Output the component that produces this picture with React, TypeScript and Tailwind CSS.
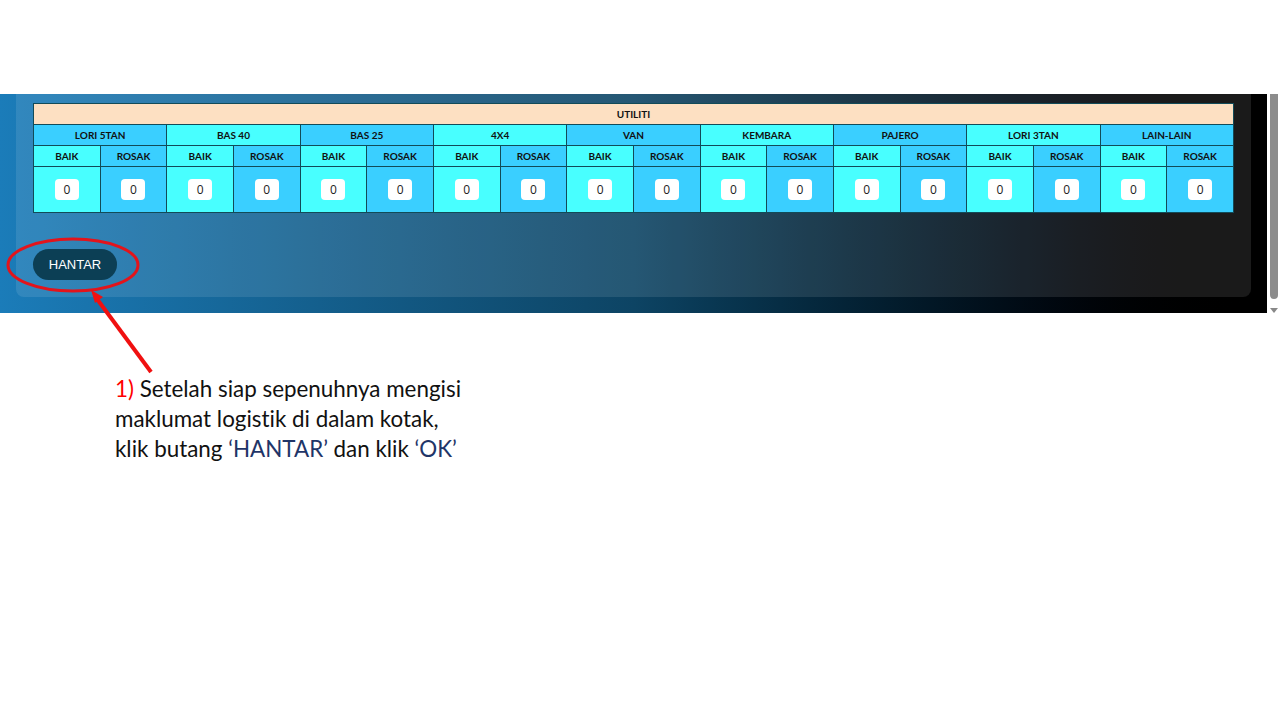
const vehicles = [
  'LORI 5TAN',
  'BAS 40',
  'BAS 25',
  '4X4',
  'VAN',
  'KEMBARA',
  'PAJERO',
  'LORI 3TAN',
  'LAIN-LAIN',
];

const cell = 'border border-[#124b58] text-center align-middle';
const deep = 'bg-[#3acfff]';
const light = 'bg-[#48ffff]';

export default function App() {
  return (
    <div className="relative w-[1280px] h-[720px] bg-white overflow-hidden font-['Lato',sans-serif]">
      <div className="h-[94px]" />

      {/* screenshot of the form */}
      <div className="flex h-[219px]">
        <div className="w-[1267px] bg-gradient-to-r from-[#1b7cb9] via-[#0d4464] to-black px-4 pb-4">
          <div className="h-full rounded-b-lg bg-white/10 px-[17px] pt-[9px]">
            <table className="w-[1201px] table-fixed border-collapse text-[10px] font-bold text-[#111]">
              <tbody>
                <tr className="h-[21px]">
                  <td colSpan={18} className={`${cell} bg-[#fde0c2]`}>
                    UTILITI
                  </td>
                </tr>
                <tr className="h-[21px]">
                  {vehicles.map((v, i) => (
                    <td key={v} colSpan={2} className={`${cell} ${i % 2 === 0 ? deep : light}`}>
                      {v}
                    </td>
                  ))}
                </tr>
                <tr className="h-[21px]">
                  {vehicles.map((v) => [
                    <td key={v + 'b'} className={`${cell} ${light}`}>BAIK</td>,
                    <td key={v + 'r'} className={`${cell} ${deep}`}>ROSAK</td>,
                  ])}
                </tr>
                <tr className="h-[46px]">
                  {vehicles.map((v) =>
                    ['b', 'r'].map((k) => (
                      <td key={v + k} className={`${cell} ${k === 'b' ? light : deep}`}>
                        <div className="mx-auto flex h-[21px] w-[24px] items-center justify-center rounded bg-white font-['Open_Sans',sans-serif] text-[12px] font-normal text-[#222]">
                          0
                        </div>
                      </td>
                    ))
                  )}
                </tr>
              </tbody>
            </table>

            <button className="mt-[36px] flex h-[31px] w-[84px] items-center justify-center rounded-full bg-[#0c3f55] font-['Liberation_Sans',sans-serif] text-[13px] text-white">
              HANTAR
            </button>
          </div>
        </div>
        {/* scrollbar */}
        <div className="flex w-[13px] flex-col items-center bg-white">
          <div className="h-[205px] w-[8px] rounded-b bg-[#8c8c8c]" />
          <div className="mt-[9px] h-0 w-0 border-x-[4px] border-t-[5px] border-x-transparent border-t-[#888]" />
        </div>
      </div>

      {/* annotation */}
      <div className="ml-[115px] mt-[61px] text-[22.4px] leading-[30px] text-[#111] [font-variant-ligatures:none]">
        <p>
          <span className="text-[#ff0000]">1)</span> Setelah siap sepenuhnya mengisi
        </p>
        <p>maklumat logistik di dalam kotak,</p>
        <p>
          klik butang <span className="text-[#1f3568]">‘HANTAR’</span> dan klik{' '}
          <span className="text-[#1f3568]">‘OK’</span>
        </p>
      </div>

      <svg className="pointer-events-none absolute left-0 top-0" width="1280" height="720">
        <ellipse cx="73" cy="265" rx="65" ry="26" fill="none" stroke="#e3141b" strokeWidth="3" />
        <line x1="151" y1="372" x2="97" y2="299" stroke="#f01010" strokeWidth="4" />
        <polygon points="91,290 103,297 95,303" fill="#f01010" />
      </svg>
    </div>
  );
}
